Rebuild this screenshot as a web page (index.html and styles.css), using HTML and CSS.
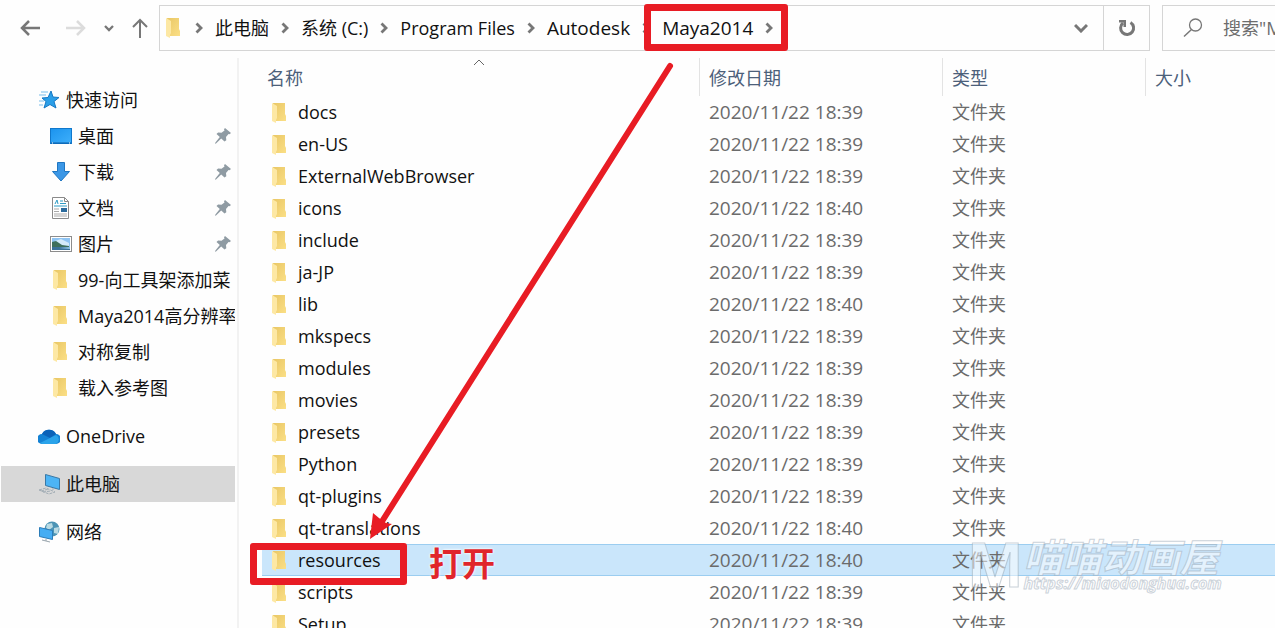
FILE: index.html
```
<!DOCTYPE html>
<html lang="zh-CN">
<head>
  <meta charset="UTF-8">
  <meta name="viewport" content="width=device-width, initial-scale=1.0">
  <title>Maya2014</title>
  <link rel="stylesheet" href="styles.css">
</head>
<body>
  <svg class="sprite" aria-hidden="true">
    <defs>
      <linearGradient id="gold" x1="0" y1="0" x2="1" y2="1">
        <stop offset="0" stop-color="#e9c765"/>
        <stop offset="1" stop-color="#fbdf86"/>
      </linearGradient>
      <linearGradient id="sky" x1="0" y1="0" x2="1" y2="1">
        <stop offset="0" stop-color="#1b93ee"/>
        <stop offset="1" stop-color="#3fb0fb"/>
      </linearGradient>
    </defs>
    <symbol id="folder" viewBox="0 0 14 20">
      <path d="M1 0h12v11l1 2v5H4z" fill="url(#gold)"/>
      <path d="M0 0l5 3v12l-1 2v3l-4-2z" fill="#fde8a4"/>
    </symbol>
    <symbol id="chevron" viewBox="0 0 8 12">
      <path d="M1.500 1.500L6 6l-4.500 4.500" fill="none" stroke="#777" stroke-width="2.800"/>
    </symbol>
    <symbol id="pin" viewBox="0 0 16 16">
      <path d="M10 0l6 5-1.500 1.200-1-.3-2.500 3 .3 3.300-1.800 1.400-3.300-3L1 15.500l-1 .3.400-1.200L4.800 9 1.500 6l1.600-1.500 3.400.3L9.500 2.500 9 1.300z" fill="#8f9ba3"/>
    </symbol>
  </svg>

  <div class="explorer">
    <header class="toolbar">
      <nav class="nav-buttons">
        <button aria-label="后退"><svg width="20" height="16" viewBox="0 0 20 16"><path d="M20 8H2M9 1L2 8l7 7" fill="none" stroke="#777" stroke-width="2.500"/></svg></button>
        <button aria-label="前进" disabled><svg width="20" height="16" viewBox="0 0 20 16"><path d="M0 8h18M11 1l7 7-7 7" fill="none" stroke="#dcdcdc" stroke-width="2.500"/></svg></button>
        <button class="recent" aria-label="最近浏览的位置"><svg width="10" height="7" viewBox="0 0 10 7"><path d="M1 1l4 4 4-4" fill="none" stroke="#777" stroke-width="2.300"/></svg></button>
        <button aria-label="向上"><svg width="16" height="20" viewBox="0 0 16 20"><path d="M8 20V2M1 9l7-7 7 7" fill="none" stroke="#777" stroke-width="2"/></svg></button>
      </nav>
      <div class="address">
        <svg class="folder"><use href="#folder"/></svg>
        <svg class="chevron"><use href="#chevron"/></svg>
        <a href="#">此电脑</a>
        <svg class="chevron"><use href="#chevron"/></svg>
        <a href="#">系统 (C:)</a>
        <svg class="chevron"><use href="#chevron"/></svg>
        <a href="#">Program Files</a>
        <svg class="chevron"><use href="#chevron"/></svg>
        <a href="#" class="deep">Autodesk</a>
        <svg class="chevron"><use href="#chevron"/></svg>
        <a href="#" class="deep">Maya2014</a>
        <svg class="chevron"><use href="#chevron"/></svg>
        <button class="history" aria-label="以前的位置"><svg width="14" height="10" viewBox="0 0 14 10"><path d="M1 2l6 6 6-6" fill="none" stroke="#777" stroke-width="3"/></svg></button>
        <button class="refresh" aria-label="刷新"><svg width="18" height="18" viewBox="0 0 18 18"><path d="M12.500 3.500a6.500 6.500 0 1 1-7.500.5" fill="none" stroke="#777" stroke-width="3"/><path d="M1 1h7v7H5.500V3.500H1z" fill="#777"/></svg></button>
      </div>
      <label class="search">
        <svg width="20" height="20" viewBox="0 0 20 20"><circle cx="12.500" cy="7" r="6" fill="none" stroke="#777" stroke-width="1.300"/><path d="M8.500 11.500L1 18.500" stroke="#777" stroke-width="1.500"/></svg>
        <input type="text" placeholder="搜索&quot;Maya2014&quot;" aria-label="搜索">
      </label>
    </header>

    <div class="body">
      <aside class="sidebar">
        <ul>
          <li><a href="#"><svg class="icon" viewBox="0 0 22 22"><path d="M13 2l2 6 6 .5-5 4 2 6.500-6-3.500L6 19l2-6.500L4 9l6-.5z" fill="#2b9fe8" stroke="#1678c4"/><path d="M3 3h7M1 6h7M1 12h5M1 16h4" stroke="#79bdea"/></svg>快速访问</a></li>
          <li class="sub"><a href="#"><svg class="icon" viewBox="0 0 22 22"><rect x=".5" y="3.500" width="21" height="15" fill="url(#sky)" stroke="#1078cc"/><path d="M1 18h20" stroke="#0b5fa8"/><path d="M2 18h1M19 18h1" stroke="#fff"/></svg>桌面</a><svg class="pin"><use href="#pin"/></svg></li>
          <li class="sub"><a href="#"><svg class="icon" viewBox="0 0 22 22"><path d="M7.500 1.500h7v9h5L11 20l-8.500-9.500h5z" fill="#3b97e6" stroke="#1f76c2"/></svg>下载</a><svg class="pin"><use href="#pin"/></svg></li>
          <li class="sub"><a href="#"><svg class="icon" viewBox="0 0 22 22"><path d="M2.500.5h12l4 4v17h-16z" fill="#fff" stroke="#8a8a8a"/><path d="M14.500.5v4h4" fill="none" stroke="#8a8a8a"/><path d="M5 7l2-4 1 4M10 4h3M10 6.500h6M4 9h13" fill="none" stroke="#2d9bc4"/><path d="M4 12h5M4 14.500h5M4 17h13M4 19h13" stroke="#a9a9a9"/><path d="M11 11h6v4h-6z" fill="#2a6a9c"/></svg>文档</a><svg class="pin"><use href="#pin"/></svg></li>
          <li class="sub"><a href="#"><svg class="icon" viewBox="0 0 22 22"><rect x=".5" y="3.500" width="21" height="15" fill="#fff" stroke="#8c8c8c"/><path d="M2 5h18v12H2z" fill="#8fc4f3"/><path d="M5 8l6-2 8 4v3H5z" fill="#d3eafa"/><path d="M2 9l4-1 6 4 7 1v1H2z" fill="#3e6f5c"/><path d="M2 14h18v3H2z" fill="#3a7199"/><path d="M9 15l11-1v2z" fill="#8fc3e4"/></svg>图片</a><svg class="pin"><use href="#pin"/></svg></li>
          <li class="sub"><a href="#"><svg class="folder"><use href="#folder"/></svg>99-向工具架添加菜</a></li>
          <li class="sub"><a href="#"><svg class="folder"><use href="#folder"/></svg>Maya2014高分辨率</a></li>
          <li class="sub"><a href="#"><svg class="folder"><use href="#folder"/></svg>对称复制</a></li>
          <li class="sub"><a href="#"><svg class="folder"><use href="#folder"/></svg>载入参考图</a></li>
        </ul>
        <ul>
          <li><a href="#"><svg class="icon" viewBox="1 0 22 22"><path d="M5 19a5 5 0 0 1 0-10 8 8 0 0 1 14 0 5 5 0 0 1 0 10z" fill="#1482d4"/><path d="M5 9a8 8 0 0 1 14 0l-6 4z" fill="#0b62b8"/><path d="M3 18l10-5 6-3a5 5 0 0 1 0 9H5z" fill="#2aa3ea"/></svg>OneDrive</a></li>
        </ul>
        <ul>
          <li class="selected"><a href="#"><svg class="icon" viewBox="0 0 22 22"><path d="M7.500 1.500l14 4v11l-14-4z" fill="#4cb4f5" stroke="#3a78a5"/><path d="M15 15v2M1 17l7-2 9 4-6 2zM3 18l8-2M5 19l8-1" fill="none" stroke="#a2adb5" stroke-dasharray="3 1"/></svg>此电脑</a></li>
        </ul>
        <ul>
          <li><a href="#"><svg class="icon" viewBox="0 0 22 22"><circle cx="14" cy="8" r="7.500" fill="#4c94b5"/><path d="M9 3l5-1 1 4-4 3-3-2zM16 7l5-1-1 7-4-1z" fill="#b9dae3"/><path d="M1.500 6.500l13 3v9l-13-3z" fill="#45adf3" stroke="#2b7cb8"/><path d="M8 18v2M4 19l8 2" stroke="#99a5ad"/></svg>网络</a></li>
        </ul>
      </aside>

      <main class="files">
        <table>
          <colgroup><col class="col-name"><col class="col-date"><col class="col-type"><col></colgroup>
          <thead>
            <tr>
              <th>名称<svg class="sort" viewBox="0 0 12 7"><path d="M1 6l5-5 5 5" fill="none" stroke="#666"/></svg></th>
              <th>修改日期</th><th>类型</th><th>大小</th>
            </tr>
          </thead>
          <tbody>
            <tr><td><svg class="folder"><use href="#folder"/></svg>docs</td><td>2020/11/22 18:39</td><td>文件夹</td><td></td></tr>
            <tr><td><svg class="folder"><use href="#folder"/></svg>en-US</td><td>2020/11/22 18:39</td><td>文件夹</td><td></td></tr>
            <tr><td><svg class="folder"><use href="#folder"/></svg>ExternalWebBrowser</td><td>2020/11/22 18:39</td><td>文件夹</td><td></td></tr>
            <tr><td><svg class="folder"><use href="#folder"/></svg>icons</td><td>2020/11/22 18:40</td><td>文件夹</td><td></td></tr>
            <tr><td><svg class="folder"><use href="#folder"/></svg>include</td><td>2020/11/22 18:39</td><td>文件夹</td><td></td></tr>
            <tr><td><svg class="folder"><use href="#folder"/></svg>ja-JP</td><td>2020/11/22 18:39</td><td>文件夹</td><td></td></tr>
            <tr><td><svg class="folder"><use href="#folder"/></svg>lib</td><td>2020/11/22 18:40</td><td>文件夹</td><td></td></tr>
            <tr><td><svg class="folder"><use href="#folder"/></svg>mkspecs</td><td>2020/11/22 18:39</td><td>文件夹</td><td></td></tr>
            <tr><td><svg class="folder"><use href="#folder"/></svg>modules</td><td>2020/11/22 18:39</td><td>文件夹</td><td></td></tr>
            <tr><td><svg class="folder"><use href="#folder"/></svg>movies</td><td>2020/11/22 18:39</td><td>文件夹</td><td></td></tr>
            <tr><td><svg class="folder"><use href="#folder"/></svg>presets</td><td>2020/11/22 18:39</td><td>文件夹</td><td></td></tr>
            <tr><td><svg class="folder"><use href="#folder"/></svg>Python</td><td>2020/11/22 18:39</td><td>文件夹</td><td></td></tr>
            <tr><td><svg class="folder"><use href="#folder"/></svg>qt-plugins</td><td>2020/11/22 18:39</td><td>文件夹</td><td></td></tr>
            <tr><td><svg class="folder"><use href="#folder"/></svg>qt-translations</td><td>2020/11/22 18:40</td><td>文件夹</td><td></td></tr>
            <tr class="selected"><td><svg class="folder"><use href="#folder"/></svg>resources</td><td>2020/11/22 18:40</td><td>文件夹</td><td></td></tr>
            <tr><td><svg class="folder"><use href="#folder"/></svg>scripts</td><td>2020/11/22 18:39</td><td>文件夹</td><td></td></tr>
            <tr><td><svg class="folder"><use href="#folder"/></svg>Setup</td><td>2020/11/22 18:39</td><td>文件夹</td><td></td></tr>
          </tbody>
        </table>
      </main>
    </div>

    <!-- tutorial marks drawn over the window -->
    <div class="mark mark-path"></div>
    <div class="mark mark-row"></div>
    <svg class="arrow" viewBox="0 0 310 485"><path d="M300 5L11 462" stroke="#e81c24" stroke-width="6" stroke-linecap="round"/><path d="M0 478L3 452l6 5 7 5 6 1z" fill="#e81c24"/></svg>
    <div class="mark-text">打开</div>
    <div class="watermark">
      <span class="wm-logo">M</span>
      <span class="wm-lines"><span class="wm-name">喵喵动画屋</span><span class="wm-url">https://miaodonghua.com</span></span>
    </div>
  </div>
</body>
</html>
```
FILE: styles.css
```
* { box-sizing: border-box; margin: 0; padding: 0; }
body {
  font-family: "Open Sans", "Noto Sans CJK SC", sans-serif;
  font-size: 18px;
  line-height: 32px;
  color: #111;
  background: #fefefe;
  overflow: hidden;
}
a { color: inherit; text-decoration: none; }
button { background: none; border: none; cursor: pointer; }
svg { flex: none; }
ul { list-style: none; }
.sprite { position: absolute; width: 0; height: 0; }
.folder { width: 14px; height: 20px; }
.explorer {
  position: relative;
  height: 100vh;
  overflow: hidden;
  display: flex;
  flex-direction: column;
}

/* toolbar */
.toolbar {
  display: flex;
  padding-top: 5px;
  height: 58px;
  flex: none;
}
.nav-buttons {
  display: flex;
  align-items: center;
  width: 159px;
  height: 46px;
  padding-left: 20px;
  gap: 26px;
}
.nav-buttons button { display: flex; }
.nav-buttons .recent { margin: 0 -8px; }
.address {
  flex: 1;
  display: flex;
  align-items: center;
  gap: 12px;
  height: 46px;
  padding-left: 6px;
  border: 1px solid #d5d5d5;
  line-height: 30px;
  white-space: nowrap;
}
.address .folder { margin-right: 3px; }
.address .deep { font-size: 19px; }
.chevron { width: 8px; height: 12px; }
.history { margin-left: auto; width: 20px; }
.refresh {
  display: flex;
  align-items: center;
  justify-content: center;
  width: 46px;
  height: 44px;
  border-left: 1px solid #d5d5d5;
}
.search {
  display: flex;
  align-items: center;
  gap: 20px;
  width: 113px;
  height: 46px;
  margin-left: 12px;
  padding-left: 20px;
  border: 1px solid #d5d5d5;
  border-right: none;
}
.search input {
  width: 100%;
  min-width: 0;
  border: none;
  outline: none;
  background: none;
  font: inherit;
}
.search input::placeholder { color: #6d6d6d; }

/* navigation pane */
.body { flex: 1; display: flex; min-height: 0; }
.sidebar {
  width: 239px;
  flex: none;
  padding: 24px 2px 0 1px;
  border-right: 2px solid #f2f2f2;
}
.sidebar ul { margin-bottom: 12px; }
.sidebar li {
  display: flex;
  align-items: center;
  height: 36px;
  padding-left: 37px;
}
.sidebar li.sub { padding-left: 49px; }
.sidebar li.selected { background: #d8d8d8; }
.sidebar a {
  flex: 1;
  display: flex;
  align-items: center;
  gap: 6px;
  overflow: hidden;
  white-space: nowrap;
}
.sidebar .folder { margin: 0 5px 0 3px; }
.icon { width: 22px; height: 22px; }
.pin { width: 16px; height: 16px; margin-right: 4px; }

/* file list */
.files { flex: 1; padding-left: 23px; overflow: hidden; }
table {
  width: 100%;
  table-layout: fixed;
  border-collapse: separate;
  border-spacing: 0;
}
.col-name { width: 438px; }
.col-date { width: 243px; }
.col-type { width: 203px; }
th {
  position: relative;
  height: 38px;
  padding: 2px 0 0 9px;
  border-right: 1px solid #e3e3e3;
  font-weight: normal;
  text-align: left;
  color: #4c607a;
}
th:first-child { padding-left: 5px; }
th:last-child { border-right: none; }
.sort {
  position: absolute;
  left: 50%;
  top: 1px;
  width: 12px;
  height: 7px;
  margin-left: -8px;
}
td {
  height: 32px;
  padding-left: 9px;
  white-space: nowrap;
  color: #6b6b6b;
}
td:first-child { padding-left: 10px; color: #111; }
td:nth-child(2) { font-size: 19px; }
td .folder { margin-right: 12px; vertical-align: -4px; }
tr.selected td {
  background: #cae6fb;
  box-shadow: inset 0 1px #9bcdf0, inset 0 -1px #9bcdf0;
}

/* marks */
.mark {
  position: absolute;
  border: 7px solid #e81c24;
  border-radius: 3px;
}
.mark-path { left: 644px; top: 4px; width: 144px; height: 47px; }
.mark-row { left: 250px; top: 543px; width: 157px; height: 42px; }
.arrow {
  position: absolute;
  left: 370px;
  top: 61px;
  width: 310px;
  height: 485px;
}
.mark-text {
  position: absolute;
  left: 429px;
  top: 544px;
  font-size: 33px;
  line-height: 40px;
  font-weight: bold;
  color: #e0252b;
  text-shadow: 0 0 2px #fff, 0 0 3px #fff;
}
.watermark {
  position: absolute;
  left: 967px;
  top: 540px;
  display: flex;
  font-weight: bold;
  color: rgba(255, 255, 255, 0.5);
  -webkit-text-stroke: 1px rgba(150, 165, 180, 0.5);
}
.wm-logo { font-size: 60px; line-height: 48px; }
.wm-lines { display: flex; flex-direction: column; font-style: italic; }
.wm-name { font-size: 39px; line-height: 34px; }
.wm-url { font-size: 16px; line-height: 18px; }
```
